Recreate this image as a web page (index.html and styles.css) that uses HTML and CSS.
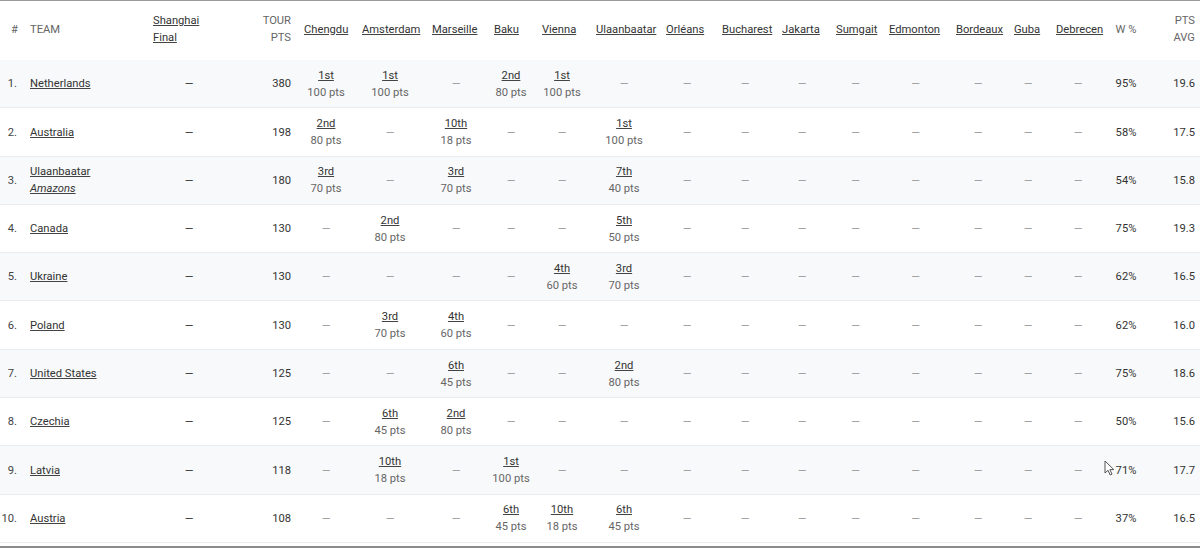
FILE: index.html
```html
<!DOCTYPE html>
<html>
<head>
<meta charset="utf-8">
<link rel="stylesheet" href="styles.css">
</head>
<body>
<div class="wrap">
<table class="standings">
<thead>
<tr>
<th class="w-rank r">#</th>
<th class="w-team plain">TEAM</th>
<th class="w-sf"><a>Shanghai<br>Final</a></th>
<th class="w-tour r">TOUR<br>PTS</th>
<th class="w-chengdu"><a>Chengdu</a></th>
<th class="w-ams"><a>Amsterdam</a></th>
<th class="w-mar"><a>Marseille</a></th>
<th class="w-baku"><a>Baku</a></th>
<th class="w-vie"><a>Vienna</a></th>
<th class="w-ula"><a>Ulaanbaatar</a></th>
<th class="w-orl"><a>Orléans</a></th>
<th class="w-buc"><a>Bucharest</a></th>
<th class="w-jak"><a>Jakarta</a></th>
<th class="w-sum"><a>Sumgait</a></th>
<th class="w-edm"><a>Edmonton</a></th>
<th class="w-bor"><a>Bordeaux</a></th>
<th class="w-gub"><a>Guba</a></th>
<th class="w-deb"><a>Debrecen</a></th>
<th class="w-win c">W %</th>
<th class="w-avg r">PTS<br>AVG</th>
</tr>
</thead>
<tbody>
<tr>
<td class="rank">1.</td><td class="team"><a>Netherlands</a></td><td class="sf">—</td><td class="tour">380</td>
<td><a>1st</a><br><span class="pts">100 pts</span></td>
<td><a>1st</a><br><span class="pts">100 pts</span></td>
<td>—</td>
<td><a>2nd</a><br><span class="pts">80 pts</span></td>
<td><a>1st</a><br><span class="pts">100 pts</span></td>
<td>—</td>
<td>—</td><td>—</td><td>—</td><td>—</td><td>—</td><td>—</td><td>—</td><td>—</td>
<td class="win">95%</td><td class="avg">19.6</td>
</tr>
<tr>
<td class="rank">2.</td><td class="team"><a>Australia</a></td><td class="sf">—</td><td class="tour">198</td>
<td><a>2nd</a><br><span class="pts">80 pts</span></td>
<td>—</td>
<td><a>10th</a><br><span class="pts">18 pts</span></td>
<td>—</td>
<td>—</td>
<td><a>1st</a><br><span class="pts">100 pts</span></td>
<td>—</td><td>—</td><td>—</td><td>—</td><td>—</td><td>—</td><td>—</td><td>—</td>
<td class="win">58%</td><td class="avg">17.5</td>
</tr>
<tr>
<td class="rank">3.</td><td class="team"><a>Ulaanbaatar<br><em>Amazons</em></a></td><td class="sf">—</td><td class="tour">180</td>
<td><a>3rd</a><br><span class="pts">70 pts</span></td>
<td>—</td>
<td><a>3rd</a><br><span class="pts">70 pts</span></td>
<td>—</td>
<td>—</td>
<td><a>7th</a><br><span class="pts">40 pts</span></td>
<td>—</td><td>—</td><td>—</td><td>—</td><td>—</td><td>—</td><td>—</td><td>—</td>
<td class="win">54%</td><td class="avg">15.8</td>
</tr>
<tr>
<td class="rank">4.</td><td class="team"><a>Canada</a></td><td class="sf">—</td><td class="tour">130</td>
<td>—</td>
<td><a>2nd</a><br><span class="pts">80 pts</span></td>
<td>—</td>
<td>—</td>
<td>—</td>
<td><a>5th</a><br><span class="pts">50 pts</span></td>
<td>—</td><td>—</td><td>—</td><td>—</td><td>—</td><td>—</td><td>—</td><td>—</td>
<td class="win">75%</td><td class="avg">19.3</td>
</tr>
<tr>
<td class="rank">5.</td><td class="team"><a>Ukraine</a></td><td class="sf">—</td><td class="tour">130</td>
<td>—</td>
<td>—</td>
<td>—</td>
<td>—</td>
<td><a>4th</a><br><span class="pts">60 pts</span></td>
<td><a>3rd</a><br><span class="pts">70 pts</span></td>
<td>—</td><td>—</td><td>—</td><td>—</td><td>—</td><td>—</td><td>—</td><td>—</td>
<td class="win">62%</td><td class="avg">16.5</td>
</tr>
<tr>
<td class="rank">6.</td><td class="team"><a>Poland</a></td><td class="sf">—</td><td class="tour">130</td>
<td>—</td>
<td><a>3rd</a><br><span class="pts">70 pts</span></td>
<td><a>4th</a><br><span class="pts">60 pts</span></td>
<td>—</td>
<td>—</td>
<td>—</td>
<td>—</td><td>—</td><td>—</td><td>—</td><td>—</td><td>—</td><td>—</td><td>—</td>
<td class="win">62%</td><td class="avg">16.0</td>
</tr>
<tr>
<td class="rank">7.</td><td class="team"><a>United States</a></td><td class="sf">—</td><td class="tour">125</td>
<td>—</td>
<td>—</td>
<td><a>6th</a><br><span class="pts">45 pts</span></td>
<td>—</td>
<td>—</td>
<td><a>2nd</a><br><span class="pts">80 pts</span></td>
<td>—</td><td>—</td><td>—</td><td>—</td><td>—</td><td>—</td><td>—</td><td>—</td>
<td class="win">75%</td><td class="avg">18.6</td>
</tr>
<tr>
<td class="rank">8.</td><td class="team"><a>Czechia</a></td><td class="sf">—</td><td class="tour">125</td>
<td>—</td>
<td><a>6th</a><br><span class="pts">45 pts</span></td>
<td><a>2nd</a><br><span class="pts">80 pts</span></td>
<td>—</td>
<td>—</td>
<td>—</td>
<td>—</td><td>—</td><td>—</td><td>—</td><td>—</td><td>—</td><td>—</td><td>—</td>
<td class="win">50%</td><td class="avg">15.6</td>
</tr>
<tr>
<td class="rank">9.</td><td class="team"><a>Latvia</a></td><td class="sf">—</td><td class="tour">118</td>
<td>—</td>
<td><a>10th</a><br><span class="pts">18 pts</span></td>
<td>—</td>
<td><a>1st</a><br><span class="pts">100 pts</span></td>
<td>—</td>
<td>—</td>
<td>—</td><td>—</td><td>—</td><td>—</td><td>—</td><td>—</td><td>—</td><td>—</td>
<td class="win">71%</td><td class="avg">17.7</td>
</tr>
<tr>
<td class="rank">10.</td><td class="team"><a>Austria</a></td><td class="sf">—</td><td class="tour">108</td>
<td>—</td>
<td>—</td>
<td>—</td>
<td><a>6th</a><br><span class="pts">45 pts</span></td>
<td><a>10th</a><br><span class="pts">18 pts</span></td>
<td><a>6th</a><br><span class="pts">45 pts</span></td>
<td>—</td><td>—</td><td>—</td><td>—</td><td>—</td><td>—</td><td>—</td><td>—</td>
<td class="win">37%</td><td class="avg">16.5</td>
</tr>
</tbody>
</table>
<svg class="cursor" width="12" height="17" viewBox="0 0 12 17"><path d="M1 1 L1 13 L4 10.3 L6.2 15 L8 14.2 L5.9 9.6 L9.8 9.6 Z" fill="#fff" stroke="#555" stroke-width="1" stroke-linejoin="round"/></svg>
</div>
</body>
</html>
```

FILE: styles.css
```css
html, body {
  margin: 0;
  padding: 0;
  background: #fff;
}
body {
  font-family: Roboto, "Liberation Sans", Arial, sans-serif;
  font-size: 11.2px;
  color: #333;
}
.wrap {
  position: relative;
  width: 1200px;
  border-top: 1px solid #9a9a9a;
  border-bottom: 2px solid #8c8c8c;
  padding-bottom: 3px;
}
.standings {
  width: 1200px;
  table-layout: fixed;
  border-collapse: collapse;
  border-spacing: 0;
}
.standings th {
  box-sizing: border-box;
  text-align: left;
  font-weight: normal;
  color: #333;
  line-height: 17px;
  padding: 11px 0 14px 7px;
  vertical-align: middle;
  white-space: nowrap;
}
.standings th.plain, .standings th.r, .standings th.c { color: #666; }
.standings th.r { text-align: right; padding-left: 0; padding-right: 5px; }
.standings th.c { text-align: center; padding-left: 0; }
.standings th.w-rank { padding-right: 4px; }
.standings th.w-team { padding-left: 8px; }
.standings th.w-tour { padding-right: 6px; }
.standings a {
  color: #333;
  text-decoration: underline;
  text-decoration-color: #444;
  text-underline-offset: 1px;
}
.w-rank { width: 22px; }
.w-team { width: 124px; }
.w-sf { width: 86px; }
.w-tour { width: 65px; }
.w-chengdu { width: 58px; }
.w-ams { width: 70px; }
.w-mar { width: 62px; }
.w-baku { width: 48px; }
.w-vie { width: 54px; }
.w-ula { width: 70px; }
.w-orl { width: 56px; }
.w-buc { width: 60px; }
.w-jak { width: 54px; }
.w-sum { width: 53px; }
.w-edm { width: 67px; }
.w-bor { width: 58px; }
.w-gub { width: 42px; }
.w-deb { width: 58px; }
.w-win { width: 38px; }
.w-avg { width: 55px; }

.standings td {
  text-align: center;
  vertical-align: middle;
  line-height: 17px;
  padding: 6.8px 0 6.5px 0;
  border-bottom: 1px solid #e9ebee;
  color: #999;
  white-space: nowrap;
}
.standings tbody tr:nth-child(odd) td { background: #f8f9fa; }
.standings td .pts { color: #666; }
.standings td.rank { text-align: right; padding-right: 5px; color: #444; }
.standings td.team { text-align: left; padding-left: 8px; }
.standings td.sf { color: #333; }
.standings td.tour { text-align: right; padding-right: 6px; color: #333; }
.standings td.win { color: #333; }
.standings td.avg { text-align: right; padding-right: 5px; color: #333; }
.cursor {
  position: absolute;
  left: 1104px;
  top: 459px;
}
```
